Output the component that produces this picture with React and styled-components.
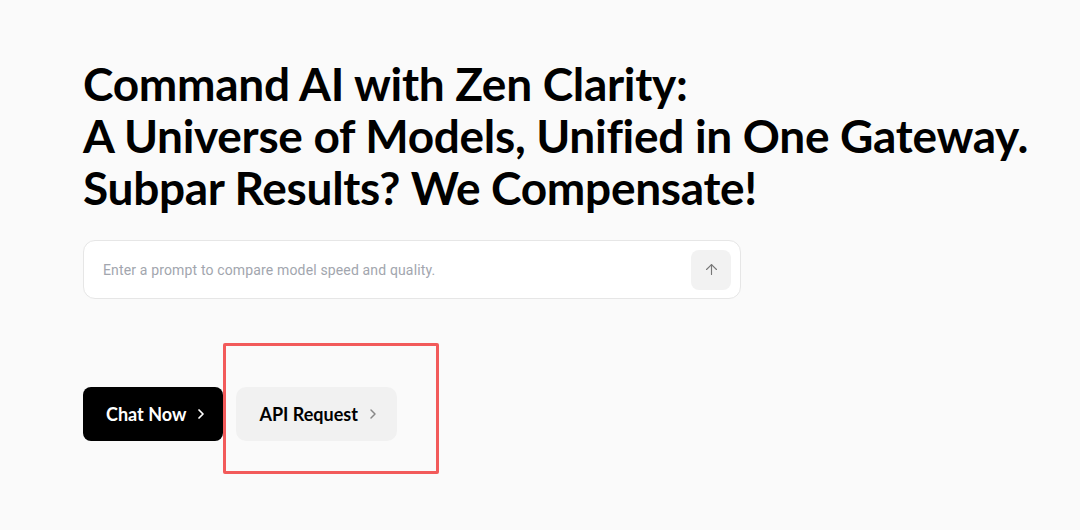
import React, { useState } from 'react';
import styled, { createGlobalStyle } from 'styled-components';
import { ArrowUp, ChevronRight } from 'lucide-react';

const GlobalStyle = createGlobalStyle`
  html, body {
    margin: 0;
    padding: 0;
    background: #fafafa;
  }
  body {
    font-family: "Lato", "Noto Sans", sans-serif;
    color: #000;
  }
`;

const Page = styled.main`
  width: 1080px;
  height: 530px;
  box-sizing: border-box;
  padding: 58px 0 0 83px;
  overflow: hidden;
`;

const Title = styled.h1`
  margin: 0;
  font-family: "Lato", sans-serif;
  font-weight: 700;
  font-size: 46px;
  line-height: 52px;
  letter-spacing: -0.3px;
  color: #000;
`;

const PromptBox = styled.form`
  margin-top: 26px;
  width: 658px;
  height: 59px;
  box-sizing: border-box;
  display: flex;
  align-items: center;
  gap: 12px;
  padding: 0 9px 0 19px;
  background: #fff;
  border: 1px solid #e6e6e6;
  border-radius: 12px;
`;

const PromptInput = styled.input`
  flex: 1;
  border: none;
  outline: none;
  padding: 0;
  background: transparent;
  font-family: "Roboto", sans-serif;
  font-size: 14px;
  letter-spacing: 0.15px;
  color: #333;

  &::placeholder {
    color: #a2a6ae;
  }
`;

const SendButton = styled.button`
  width: 40px;
  height: 40px;
  display: flex;
  align-items: center;
  justify-content: center;
  border: none;
  border-radius: 8px;
  background: #f2f2f2;
  color: #777;
  cursor: pointer;
`;

const Actions = styled.div`
  margin-top: 88px;
  display: flex;
  gap: 13px;
  position: relative;
`;

const ActionButton = styled.button`
  height: 54px;
  box-sizing: border-box;
  display: flex;
  align-items: center;
  gap: 7px;
  padding: ${p => (p.$primary ? '0 14px 0 23px' : '0 16px 0 23px')};
  border: none;
  border-radius: ${p => (p.$primary ? '8px' : '10px')};
  background: ${p => (p.$primary ? '#000' : '#f1f1f1')};
  color: ${p => (p.$primary ? '#fff' : '#000')};
  font-family: "Lato", sans-serif;
  font-weight: 700;
  font-size: 18px;
  cursor: pointer;

  svg {
    color: ${p => (p.$primary ? '#fff' : '#888')};
  }
`;

const Highlight = styled.div`
  position: absolute;
  left: 140px;
  top: -44px;
  width: 216px;
  height: 131px;
  box-sizing: border-box;
  border: 3px solid #f25a5a;
  border-radius: 2px;
  pointer-events: none;
`;

const App = () => {
  const [prompt, setPrompt] = useState('');

  return (
    <Page>
      <GlobalStyle />
      <Title>
        Command AI with Zen Clarity:
        <br />
        A Universe of Models, Unified in One Gateway.
        <br />
        Subpar Results? We Compensate!
      </Title>

      <PromptBox onSubmit={e => e.preventDefault()}>
        <PromptInput
          value={prompt}
          onChange={e => setPrompt(e.target.value)}
          placeholder="Enter a prompt to compare model speed and quality."
        />
        <SendButton type="submit" aria-label="Send">
          <ArrowUp size={17} strokeWidth={1.6} />
        </SendButton>
      </PromptBox>

      <Actions>
        <ActionButton $primary>
          Chat Now
          <ChevronRight size={16} strokeWidth={2.6} />
        </ActionButton>
        <ActionButton>
          API Request
          <ChevronRight size={16} strokeWidth={2.2} />
        </ActionButton>
        <Highlight />
      </Actions>
    </Page>
  );
};

export default App;
